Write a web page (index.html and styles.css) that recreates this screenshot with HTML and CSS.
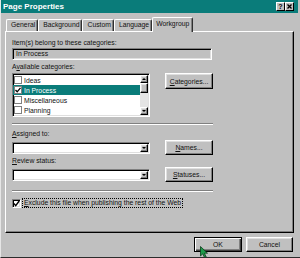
FILE: index.html
```html
<!DOCTYPE html>
<html lang="en">
  <head>
    <meta charset="UTF-8" />
    <title>Page Properties</title>
    <link rel="stylesheet" href="styles.css">
  </head>
  <body>
    <div class="window">
      <!-- title bar -->
      <div class="titlebar">
        <span class="title">Page Properties</span>
        <span class="tbtn help">?</span>
        <span class="tbtn">
          <svg width="5" height="5" viewBox="0 0 5 5"><path d="M0.5 0.5 L4.5 4.5 M4.5 0.5 L0.5 4.5" stroke="#000" stroke-width="1.3" /></svg>
        </span>
      </div>

      <!-- tabs -->
      <div class="tabs">
        <div class="tab">General</div>
        <div class="tab">Background</div>
        <div class="tab">Custom</div>
        <div class="tab">Language</div>
        <div class="tab active">Workgroup</div>
      </div>

      <div class="panel">
        <div class="label">Item(s) belong to these categories:</div>
        <div class="field">In Process</div>

        <div class="label l2">A<u>v</u>ailable categories:</div>
        <div class="row">
          <div class="listbox">
            <div class="items">
              <div class="item"><span class="cb"></span>Ideas</div>
              <div class="item sel">
                <span class="cb">
                  <svg width="6" height="6" viewBox="0 0 6 6"><path d="M0.5 3 L2.2 4.8 L5.5 0.8" fill="none" stroke="#000" stroke-width="1.3" /></svg>
                </span>In Process
              </div>
              <div class="item"><span class="cb"></span>Miscellaneous</div>
              <div class="item"><span class="cb"></span>Planning</div>
            </div>
            <div class="scroll">
              <div class="sbtn"><span class="arrow up"></span></div>
              <div class="thumb"></div>
              <div class="track"></div>
              <div class="sbtn"><span class="arrow"></span></div>
            </div>
          </div>
          <div class="btn"><span><u>C</u>ategories...</span></div>
        </div>

        <div class="sep"></div>

        <div class="label l3"><u>A</u>ssigned to:</div>
        <div class="row2">
          <div class="combo"><div class="drop"><span class="arrow"></span></div></div>
          <div class="btn"><span><u>N</u>ames...</span></div>
        </div>

        <div class="label l4"><u>R</u>eview status:</div>
        <div class="row2">
          <div class="combo"><div class="drop"><span class="arrow"></span></div></div>
          <div class="btn"><span><u>S</u>tatuses...</span></div>
        </div>

        <div class="sep sep2"></div>

        <div class="checkrow">
          <span class="cb big">
            <svg width="7" height="7" viewBox="0 0 7 7"><path d="M0.8 3.4 L2.7 5.6 L6.2 1" fill="none" stroke="#000" stroke-width="1.4" /></svg>
          </span>
          <span class="focus"><u>E</u>xclude this file when publishing the rest of the Web</span>
        </div>
      </div>

      <!-- dialog buttons -->
      <div class="footer">
        <div class="btn default">OK</div>
        <div class="btn cancel">Cancel</div>
      </div>

      <svg class="cursor" width="9" height="13" viewBox="0 0 9 13">
        <path d="M0.5 0.5 L0.5 10 L2.8 7.8 L4.6 11.8 L6.2 11 L4.4 7.2 L7.5 7.2 Z" fill="#1f9a4a" stroke="#0b3d1c" stroke-width="0.8" />
      </svg>
    </div>
  </body>
</html>
```

FILE: styles.css
```css
/* reset */
* {
  margin: 0;
  padding: 0;
  box-sizing: border-box;
}
body {
  background: #c0c0c0;
  font: 6.8px/9px 'Liberation Sans', Arial, sans-serif;
  color: #111;
}
u {
  text-decoration: underline;
  text-underline-offset: 1px;
}

/* window */
.window {
  position: relative;
  width: 300px;
  height: 258px;
  overflow: hidden;
  background: #c0c0c0;
  border-left: 1px solid #e6e6e6;
  border-bottom: 1px solid #2c2c2c;
}

/* title bar */
.titlebar {
  height: 13px;
  margin-right: 2px;
  padding: 0 4px 0 2px;
  background: #0a7c7a;
  color: #fff;
  font-weight: bold;
  font-size: 8px;

  display: flex;
  align-items: center;
}
.title {
  flex: 1;
}
.tbtn {
  width: 9px;
  height: 9px;
  background: #c0c0c0;
  border: 1px solid;
  border-color: #fff #000 #000 #fff;
  color: #000;
  font-size: 7px;
  line-height: 7px;

  display: flex;
  justify-content: center;
  align-items: center;
}

/* tabs */
.tabs {
  height: 14px;
  margin-top: 4px;
  padding-left: 5px;

  display: flex;
  align-items: flex-end;
}
.tab {
  height: 12px;
  padding: 0 2px 0 4px;
  line-height: 10px;
  border: 1px solid;
  border-color: #fff #303030 transparent #fff;
  border-bottom: none;
  border-radius: 2px 2px 0 0;
  box-shadow: inset -1px 0 #808080;
}
.tab.active {
  height: 15px;
  margin-bottom: -1px;
  padding: 1px 3px 0 3px;
  background: #c0c0c0;
  position: relative;
  z-index: 1;
}

/* panel */
.panel {
  width: 289px;
  height: 202px;
  margin-left: 4px;
  padding: 6px 0 0 6px;
  border: 1px solid;
  border-color: #fff #000 #000 #fff;
  box-shadow: inset -1px -1px #808080;
}
.label {
  height: 9px;
}
.l2 {
  margin-top: 2px;
}
.l3 {
  margin-top: 4px;
}
.l4 {
  margin-top: 1px;
}

.field,
.listbox,
.combo,
.cb.big {
  border: 1px solid;
  border-color: #808080 #fff #fff #808080;
  box-shadow: inset 1px 1px #000, inset -1px -1px #dfdfdf;
}
.field {
  width: 200px;
  height: 12px;
  margin-top: 1px;
  padding-left: 3px;
  line-height: 10px;
}

.row {
  margin-top: 2px;
  display: flex;
  align-items: flex-start;
  gap: 15px;
}
.listbox {
  width: 138px;
  height: 44px;
  padding: 1px 1px 1px 0;
  background: #fff;
  display: flex;
}
.items {
  flex: 1;
}
.item {
  height: 10px;
  padding-left: 1px;
  display: flex;
  align-items: center;
  gap: 2px;
}
.item.sel {
  background: #0a7c7a;
  color: #fff;
}
.cb {
  width: 8px;
  height: 8px;
  background: #fff;
  border: 1px solid #808080;

  display: flex;
  justify-content: center;
  align-items: center;
}

.scroll {
  width: 8px;
  background: #e4e4e4;
  display: flex;
  flex-direction: column;
}
.sbtn,
.thumb,
.drop,
.btn {
  background: #c0c0c0;
  border: 1px solid;
  border-color: #fff #000 #000 #fff;
  box-shadow: inset -1px -1px #808080, inset 1px 1px #dfdfdf;
}
.sbtn {
  height: 8px;
  display: flex;
  justify-content: center;
  align-items: center;
}
.thumb {
  height: 10px;
}
.track {
  flex: 1;
}
.arrow {
  width: 0;
  height: 0;
  border-left: 2px solid transparent;
  border-right: 2px solid transparent;
  border-top: 2px solid #000;
}
.arrow.up {
  border-top: none;
  border-bottom: 2px solid #000;
}

.btn {
  width: 48px;
  height: 16px;
  display: flex;
  justify-content: center;
  align-items: center;
}

.sep {
  width: 201px;
  height: 2px;
  margin-top: 6px;
  border-top: 1px solid #808080;
  border-bottom: 1px solid #fff;
}
.sep2 {
  margin-top: 8px;
}

.row2 {
  height: 15px;
  margin-top: 2px;
  display: flex;
  align-items: center;
  gap: 15px;
}
.row2 .btn {
  height: 15px;
}
.combo {
  width: 138px;
  height: 12px;
  padding: 1px;
  background: #fff;
  display: flex;
  justify-content: flex-end;
}
.drop {
  width: 8px;
  display: flex;
  justify-content: center;
  align-items: center;
}

.checkrow {
  height: 10px;
  margin-top: 6px;
  display: flex;
  align-items: center;
  gap: 2px;
}
.cb.big {
  width: 9px;
  height: 9px;
}
.focus {
  padding: 0 1px;
  outline: 1px dotted #000;
  line-height: 8px;
}

/* bottom buttons */
.footer {
  margin-top: 4px;
  padding-right: 7px;
  display: flex;
  justify-content: flex-end;
  gap: 4px;
}
.footer .btn {
  height: 15px;
}
.btn.default {
  border-color: #000;
  box-shadow: inset 1px 1px #fff, inset -1px -1px #404040, inset -2px -2px #808080;
}
.btn.cancel {
  width: 47px;
}

.cursor {
  position: absolute;
  left: 199px;
  top: 246px;
}
```
